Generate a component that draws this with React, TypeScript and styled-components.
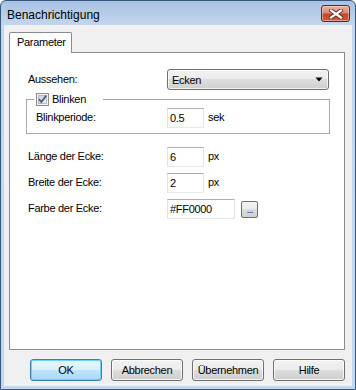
import React from 'react';
import styled, { createGlobalStyle } from 'styled-components';

const GlobalStyle = createGlobalStyle`
    body {
        margin: 0;
        background: #ffffff;
        font-family: 'Liberation Sans', Arial, sans-serif;
    }
`

const App: React.FC = () => {
    return (
        <>
            <GlobalStyle />
            <Window>
                <TitleBar>
                    <Title>Benachrichtigung</Title>
                    <CloseButton aria-label="Schließen">
                        <svg width="14" height="10" viewBox="0 0 14 10">
                            <path d="M2 1.5 L12 8.5 M12 1.5 L2 8.5" stroke="#5a2a22" strokeWidth="4" strokeLinecap="square" />
                            <path d="M2 1.5 L12 8.5 M12 1.5 L2 8.5" stroke="#ffffff" strokeWidth="2.2" strokeLinecap="square" />
                        </svg>
                    </CloseButton>
                </TitleBar>
                <Client>
                    <TabStrip>
                        <Tab>Parameter</Tab>
                    </TabStrip>
                    <Panel>
                        <Row>
                            <Label>Aussehen:</Label>
                            <Combo>
                                <span>Ecken</span>
                                <svg width="8" height="5" viewBox="0 0 8 5">
                                    <path d="M0.5 0.5 H7.5 L4 4.5 Z" fill="#000" />
                                </svg>
                            </Combo>
                        </Row>
                        <Group>
                            <Legend>
                                <CheckBox />
                                <span>Blinken</span>
                            </Legend>
                            <Row $labelWidth={127}>
                                <Label>Blinkperiode:</Label>
                                <TextBox $width={37}>0.5</TextBox>
                                <Unit>sek</Unit>
                            </Row>
                        </Group>
                        <Fields>
                            <Row>
                                <Label>Länge der Ecke:</Label>
                                <TextBox $width={37}>6</TextBox>
                                <Unit>px</Unit>
                            </Row>
                            <Row>
                                <Label>Breite der Ecke:</Label>
                                <TextBox $width={37}>2</TextBox>
                                <Unit>px</Unit>
                            </Row>
                            <Row>
                                <Label>Farbe der Ecke:</Label>
                                <TextBox $width={68}>#FF0000</TextBox>
                                <DotsButton>...</DotsButton>
                            </Row>
                        </Fields>
                    </Panel>
                    <ButtonBar>
                        <Button $default>OK</Button>
                        <Button>Abbrechen</Button>
                        <Button>Übernehmen</Button>
                        <Button>Hilfe</Button>
                    </ButtonBar>
                </Client>
            </Window>
        </>
    )
};

const CheckBox: React.FC = () => (
    <svg width="13" height="13" viewBox="0 0 13 13">
        <defs>
            <linearGradient id="cbfill" x1="0" y1="0" x2="1" y2="1">
                <stop offset="0" stopColor="#cbcfd5" />
                <stop offset="1" stopColor="#f7f7f7" />
            </linearGradient>
        </defs>
        <rect x="0.5" y="0.5" width="12" height="12" fill="#f4f4f4" stroke="#8e8f8f" />
        <rect x="2.5" y="2.5" width="8" height="8" fill="url(#cbfill)" stroke="#b6bac0" />
        <path d="M3 6.2 L5.4 9 L10.2 2.6" fill="none" stroke="#4a5f8c" strokeWidth="1.9" />
    </svg>
);

export default App;

const Window = styled.div`
    width: 356px;
    height: 390px;
    box-sizing: border-box;
    border: 1px solid #34587f;
    border-radius: 6px 6px 0 0;
    background: linear-gradient(#a9c2e0, #c2d7ee 24px, #c3d8ef);
    display: flex;
    flex-direction: column;
    overflow: hidden;
    letter-spacing: -0.3px;
`
const TitleBar = styled.div`
    height: 24px;
    display: flex;
    align-items: flex-start;
    justify-content: space-between;
    padding: 0 5px 0 6px;
    box-sizing: border-box;
`
const Title = styled.div`
    font-size: 12px;
    color: #000;
    margin-top: 7px;
    letter-spacing: 0;
`
const CloseButton = styled.div`
    width: 29px;
    height: 17px;
    margin-top: 4px;
    box-sizing: border-box;
    border: 1px solid #6a241a;
    border-radius: 3px;
    background: linear-gradient(#ebb2a5, #d98a78 45%, #c4452c 55%, #cf5b40);
    box-shadow: inset 0 0 0 1px rgba(255, 220, 210, 0.5);
    display: flex;
    align-items: center;
    justify-content: center;
`
const Client = styled.div`
    flex: 1;
    margin: 0 3px 3px 3px;
    background: #f0f0f0;
    padding: 7px 7px 0 5px;
    display: flex;
    flex-direction: column;
`
const TabStrip = styled.div`
    display: flex;
`
const Tab = styled.div`
    position: relative;
    z-index: 1;
    width: 63px;
    height: 21px;
    margin-bottom: -1px;
    box-sizing: border-box;
    border: 1px solid #898c95;
    border-bottom: none;
    border-radius: 2px 2px 0 0;
    background: #ffffff;
    font-size: 11px;
    padding: 3px 0 0 7px;
    color: #000;
`
const Panel = styled.div`
    height: 298px;
    box-sizing: border-box;
    border: 1px solid #898c95;
    background: #ffffff;
    padding: 16px 0 0 18px;
    display: flex;
    flex-direction: column;
`
const Row = styled.div<{ $labelWidth?: number }>`
    display: grid;
    grid-template-columns: ${p => p.$labelWidth ?? 135}px auto auto;
    justify-content: start;
    align-items: center;
    column-gap: 4px;
    & > :first-child {
        margin-right: -4px;
    }
`
const Label = styled.div`
    font-size: 11px;
    color: #000;
    padding-bottom: 2px;
`
const Combo = styled.div`
    width: 162px;
    height: 21px;
    box-sizing: border-box;
    border: 1px solid #707070;
    border-radius: 3px;
    background: linear-gradient(#f2f2f2, #ebebeb 50%, #dddddd 50%, #cfcfcf);
    box-shadow: inset 0 0 0 1px rgba(255, 255, 255, 0.7);
    display: flex;
    align-items: center;
    justify-content: space-between;
    padding: 0 5px 0 4px;
    font-size: 11px;
    color: #000;
`
const Group = styled.fieldset`
    margin: 2px 0 0 -2px;
    width: 304px;
    box-sizing: border-box;
    border: 1px solid #a8a8a8;
    padding: 2px 0 5px 9px;
    min-width: 0;
`
const Legend = styled.legend`
    display: flex;
    align-items: center;
    gap: 3px;
    height: 14px;
    margin-left: -2px;
    padding: 0 17px 0 2px;
    font-size: 11px;
    color: #000;
`
const TextBox = styled.div<{ $width: number }>`
    width: ${p => p.$width}px;
    height: 20px;
    box-sizing: border-box;
    border: 1px solid #e2e3ea;
    border-top-color: #abadb3;
    border-bottom-color: #e3e9ef;
    background: #ffffff;
    font-size: 11px;
    color: #000;
    padding: 3px 0 0 2px;
`
const Unit = styled.div`
    font-size: 11px;
    color: #000;
    padding-bottom: 2px;
`
const Fields = styled.div`
    margin-top: 13px;
    display: flex;
    flex-direction: column;
    gap: 6px;
`
const DotsButton = styled.div`
    width: 17px;
    height: 17px;
    margin-left: 2px;
    box-sizing: border-box;
    border: 1px solid #707070;
    border-radius: 2px;
    background: linear-gradient(#f2f2f2, #ebebeb 50%, #dddddd 50%, #cfcfcf);
    font-size: 11px;
    color: #3c2a5a;
    text-align: center;
    line-height: 15px;
    letter-spacing: -1px;
`
const ButtonBar = styled.div`
    display: flex;
    justify-content: flex-end;
    gap: 9px;
    margin-top: 9px;
`
const Button = styled.div<{ $default?: boolean }>`
    width: 72px;
    height: 22px;
    box-sizing: border-box;
    border: 1px solid ${p => (p.$default ? '#3c7fb1' : '#707070')};
    border-radius: 3px;
    background: ${p => (p.$default
        ? 'linear-gradient(#eaf6fd, #d9f0fc 50%, #bee6fd 50%, #a7d9f5)'
        : 'linear-gradient(#f2f2f2, #ebebeb 50%, #dddddd 50%, #cfcfcf)')};
    box-shadow: ${p => (p.$default
        ? 'inset 0 0 0 1px #6fd0f7'
        : 'inset 0 0 0 1px rgba(255, 255, 255, 0.8)')};
    font-size: 11px;
    color: #000;
    display: flex;
    align-items: center;
    justify-content: center;
`
